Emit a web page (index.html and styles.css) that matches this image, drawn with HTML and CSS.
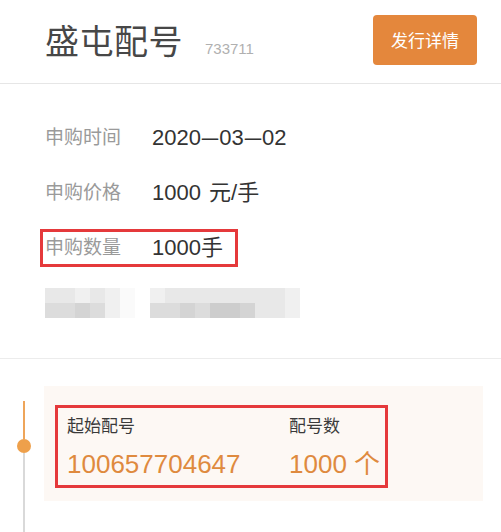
FILE: index.html
```html
<!DOCTYPE html>
<html lang="zh-CN">
<head>
<meta charset="utf-8">
<title>盛屯配号</title>
<link rel="stylesheet" href="styles.css">
</head>
<body>
<header class="head">
  <div class="title-wrap">
    <h1 class="title">盛屯配号</h1>
    <span class="code">733711</span>
  </div>
  <button class="btn">发行详情</button>
</header>

<section class="info">
  <div class="row"><span class="label">申购时间</span><span class="value">2020<span class="dash">–</span>03<span class="dash">–</span>02</span></div>
  <div class="row"><span class="label">申购价格</span><span class="value">1000<span class="sp"> </span>元/手</span></div>
  <div class="row"><span class="hl"><span class="label">申购数量</span><span class="value">1000手</span></span></div>
  <div class="row">
    <div class="mosaic m-left">
      <i class="t2"></i><i class="t2"></i><i class="t1"></i><i class="t2"></i><i class="t1"></i><i class="t0"></i>
      <i class="t3"></i><i class="t3"></i><i class="t4"></i><i class="t3"></i><i class="t1"></i><i class="t0"></i>
    </div>
    <div class="mosaic m-right">
      <i class="t1"></i><i class="t2"></i><i class="t2"></i><i class="t2"></i><i class="t2"></i><i class="t2"></i><i class="t2"></i><i class="t2"></i><i class="t2"></i><i class="t1"></i>
      <i class="t3"></i><i class="t3"></i><i class="t4"></i><i class="t3"></i><i class="t5"></i><i class="t5"></i><i class="t4"></i><i class="t2"></i><i class="t2"></i><i class="t1"></i>
    </div>
  </div>
</section>

<section class="alloc">
  <div class="timeline">
    <span class="line-top"></span>
    <span class="dot"></span>
    <span class="line-rest"></span>
  </div>
  <div class="card-col">
    <div class="card">
      <div class="box">
        <span class="c-label">起始配号</span>
        <span class="c-label">配号数</span>
        <span class="c-value">100657704647</span>
        <span class="c-value">1000 个</span>
      </div>
    </div>
  </div>
</section>
</body>
</html>
```

FILE: styles.css
```css
* { box-sizing: border-box; }
html, body { margin: 0; padding: 0; background: #fff; }
body {
  width: 501px;
  height: 532px;
  overflow: hidden;
  font-family: "Liberation Sans", "Noto Sans CJK SC", sans-serif;
  color: #333;
}

.head {
  height: 84px;
  border-bottom: 1px solid #e6e6e6;
  display: flex;
  align-items: center;
  justify-content: space-between;
  padding: 0 24px 4px 45px;
}
.title-wrap { display: flex; align-items: baseline; }
.title {
  margin: 0;
  font-family: "Noto Sans CJK SC", sans-serif;
  font-weight: 400;
  font-size: 34px;
  line-height: 40px;
  color: #474747;
  letter-spacing: 0.5px;
}
.code {
  margin-left: 22px;
  font-size: 15px;
  color: #b0b0b0;
}
.btn {
  width: 104px;
  height: 50px;
  border: none;
  border-radius: 4px;
  background: #e4873c;
  color: #fff;
  font-family: "Noto Sans CJK SC", sans-serif;
  font-size: 17px;
  padding: 0;
}

.info {
  padding: 26px 0 28px 45px;
  border-bottom: 1px solid #ececec;
}
.row {
  height: 55px;
  display: flex;
  align-items: center;
}
.label {
  width: 107px;
  font-family: "Noto Sans CJK SC", sans-serif;
  font-size: 19px;
  line-height: 26px;
  padding-bottom: 3px;
  color: #9a9a9a;
}
.value {
  font-size: 22px;
  line-height: 28px;
  color: #333;
  white-space: nowrap;
}
.dash {
  display: inline-block;
  margin: 0 3px;
  transform: scaleX(1.35);
}
.sp { margin-right: 2px; }
.hl {
  display: flex;
  align-items: center;
  height: 38px;
  margin-left: -5px;
  padding: 0 12px 0 2px;
  border: 3px solid #e5393b;
}

.mosaic {
  display: grid;
  grid-auto-rows: 15px;
}
.mosaic i { display: block; }
.m-left { grid-template-columns: repeat(6, 15px); }
.m-right { grid-template-columns: repeat(10, 15px); margin-left: 15px; }
.t0 { background: #fafafa; }
.t1 { background: #f0f0f0; }
.t2 { background: #e8e8e8; }
.t3 { background: #dcdcdc; }
.t4 { background: #d4d4d4; }
.t5 { background: #cdcdcd; }

.alloc {
  display: flex;
  height: 200px;
}
.timeline {
  width: 44px;
  display: flex;
  flex-direction: column;
  padding-top: 42px;
}
.line-top {
  display: block;
  margin-left: 23px;
  width: 2px;
  height: 38px;
  background: #eea55a;
}
.dot {
  display: block;
  margin-left: 17px;
  width: 14px;
  height: 14px;
  border-radius: 50%;
  background: #eea04b;
}
.line-rest {
  display: block;
  margin-left: 23px;
  width: 2px;
  flex: 1;
  background: #d9d9d9;
}
.card-col {
  width: 439px;
  padding-top: 27px;
}
.card {
  height: 115px;
  background: #fdf8f4;
  padding: 19px 0 0 11px;
}
.box {
  display: inline-grid;
  grid-template-columns: 222px auto;
  width: 333px;
  height: 83px;
  border: 3px solid #e5393b;
  padding: 4px 8px 0 9px;
  align-content: start;
}
.c-label {
  font-family: "Noto Sans CJK SC", sans-serif;
  font-size: 17px;
  line-height: 26px;
  color: #3a3a3a;
}
.c-value {
  font-size: 26px;
  line-height: 40px;
  margin-top: 6px;
  color: #df8a3e;
  white-space: nowrap;
}
```
